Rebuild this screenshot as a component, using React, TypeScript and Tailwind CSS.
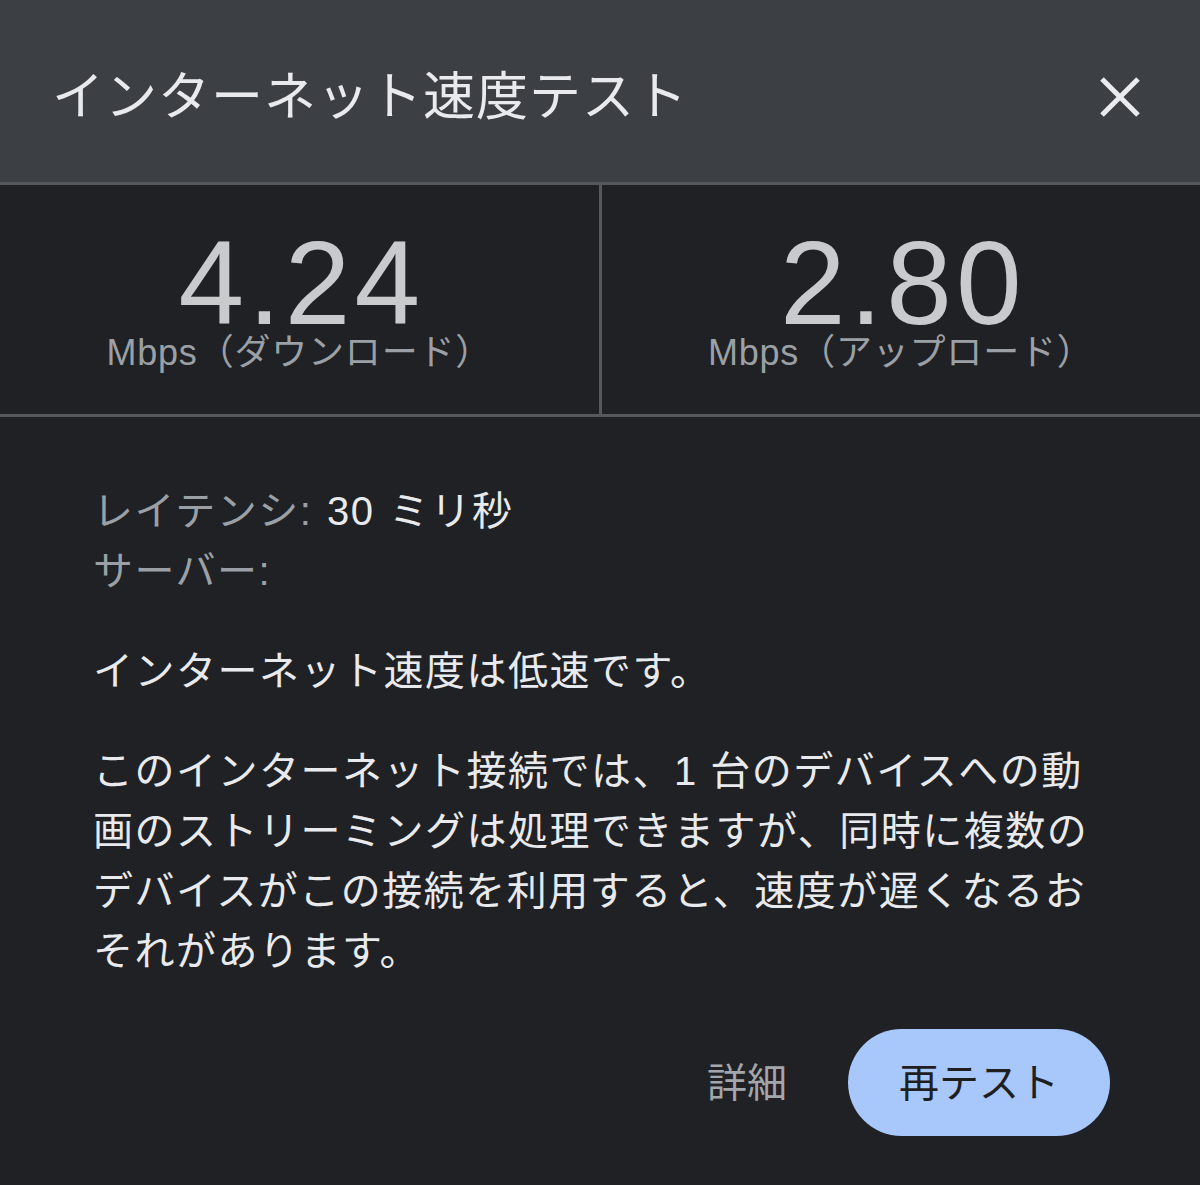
import React from 'react'

const font = { fontFamily: '"Liberation Sans", "Noto Sans CJK JP", sans-serif' }

function CloseIcon() {
    return (
        <svg width="44" height="44" viewBox="0 0 44 44" fill="none">
            <path d="M4 4 L40 40 M40 4 L4 40" stroke="#e8eaed" strokeWidth="5" strokeLinecap="butt" />
        </svg>
    )
}

function Stat({ value, label }: { value: string; label: string }) {
    return (
        <div className="flex-1 flex flex-col items-center pt-[50px]">
            <div className="text-[118px] leading-[96px] text-[#c9cacc] tracking-[4px] pl-[4px]">{value}</div>
            <div className="mt-[4px] text-[36px] leading-none text-[#9aa0a6] tracking-[0.8px]">{label}</div>
        </div>
    )
}

export default function App() {
    return (
        <div className="w-[1200px] h-[1185px] bg-[#202124] flex flex-col" style={font}>
            {/* header */}
            <div className="h-[185px] bg-[#3c3f43] border-b-[3px] border-[#55585c] flex items-center justify-between pl-[52px] pr-[58px] pt-[12px]">
                <h1 className="text-[52px] leading-none text-[#e8eaed] tracking-[1px]">インターネット速度テスト</h1>
                <CloseIcon />
            </div>

            {/* results */}
            <div className="h-[232px] flex border-b-[3px] border-[#55585c]">
                <Stat value="4.24" label="Mbps（ダウンロード）" />
                <div className="w-[3px] bg-[#55585c]" />
                <Stat value="2.80" label="Mbps（アップロード）" />
            </div>

            {/* details */}
            <div className="flex-1 flex flex-col pl-[93px] pr-[90px] pt-[64px] text-[40px] leading-[60px] tracking-[1.5px]">
                <div className="[word-spacing:2px]">
                    <span className="text-[#9aa0a6]">レイテンシ:</span>
                    <span className="text-[#e8eaed]"> 30 ミリ秒</span>
                </div>
                <div className="text-[#9aa0a6]">サーバー:</div>

                <p className="mt-[40px] text-[#e8eaed]">インターネット速度は低速です。</p>

                <p className="mt-[40px] text-[#e8eaed] whitespace-nowrap">
                    このインターネット接続では、1 台のデバイスへの動<br />
                    画のストリーミングは処理できますが、同時に複数の<br />
                    デバイスがこの接続を利用すると、速度が遅くなるお<br />
                    それがあります。
                </p>

                <div className="mt-[48px] flex items-center justify-end gap-[61px] tracking-normal">
                    <button className="text-[40px] leading-none text-[#a3a6aa]">詳細</button>
                    <button className="h-[107px] w-[262px] rounded-full bg-[#a8c7fa] text-[40px] leading-none text-[#1f1f1f]">
                        再テスト
                    </button>
                </div>
            </div>
        </div>
    )
}
